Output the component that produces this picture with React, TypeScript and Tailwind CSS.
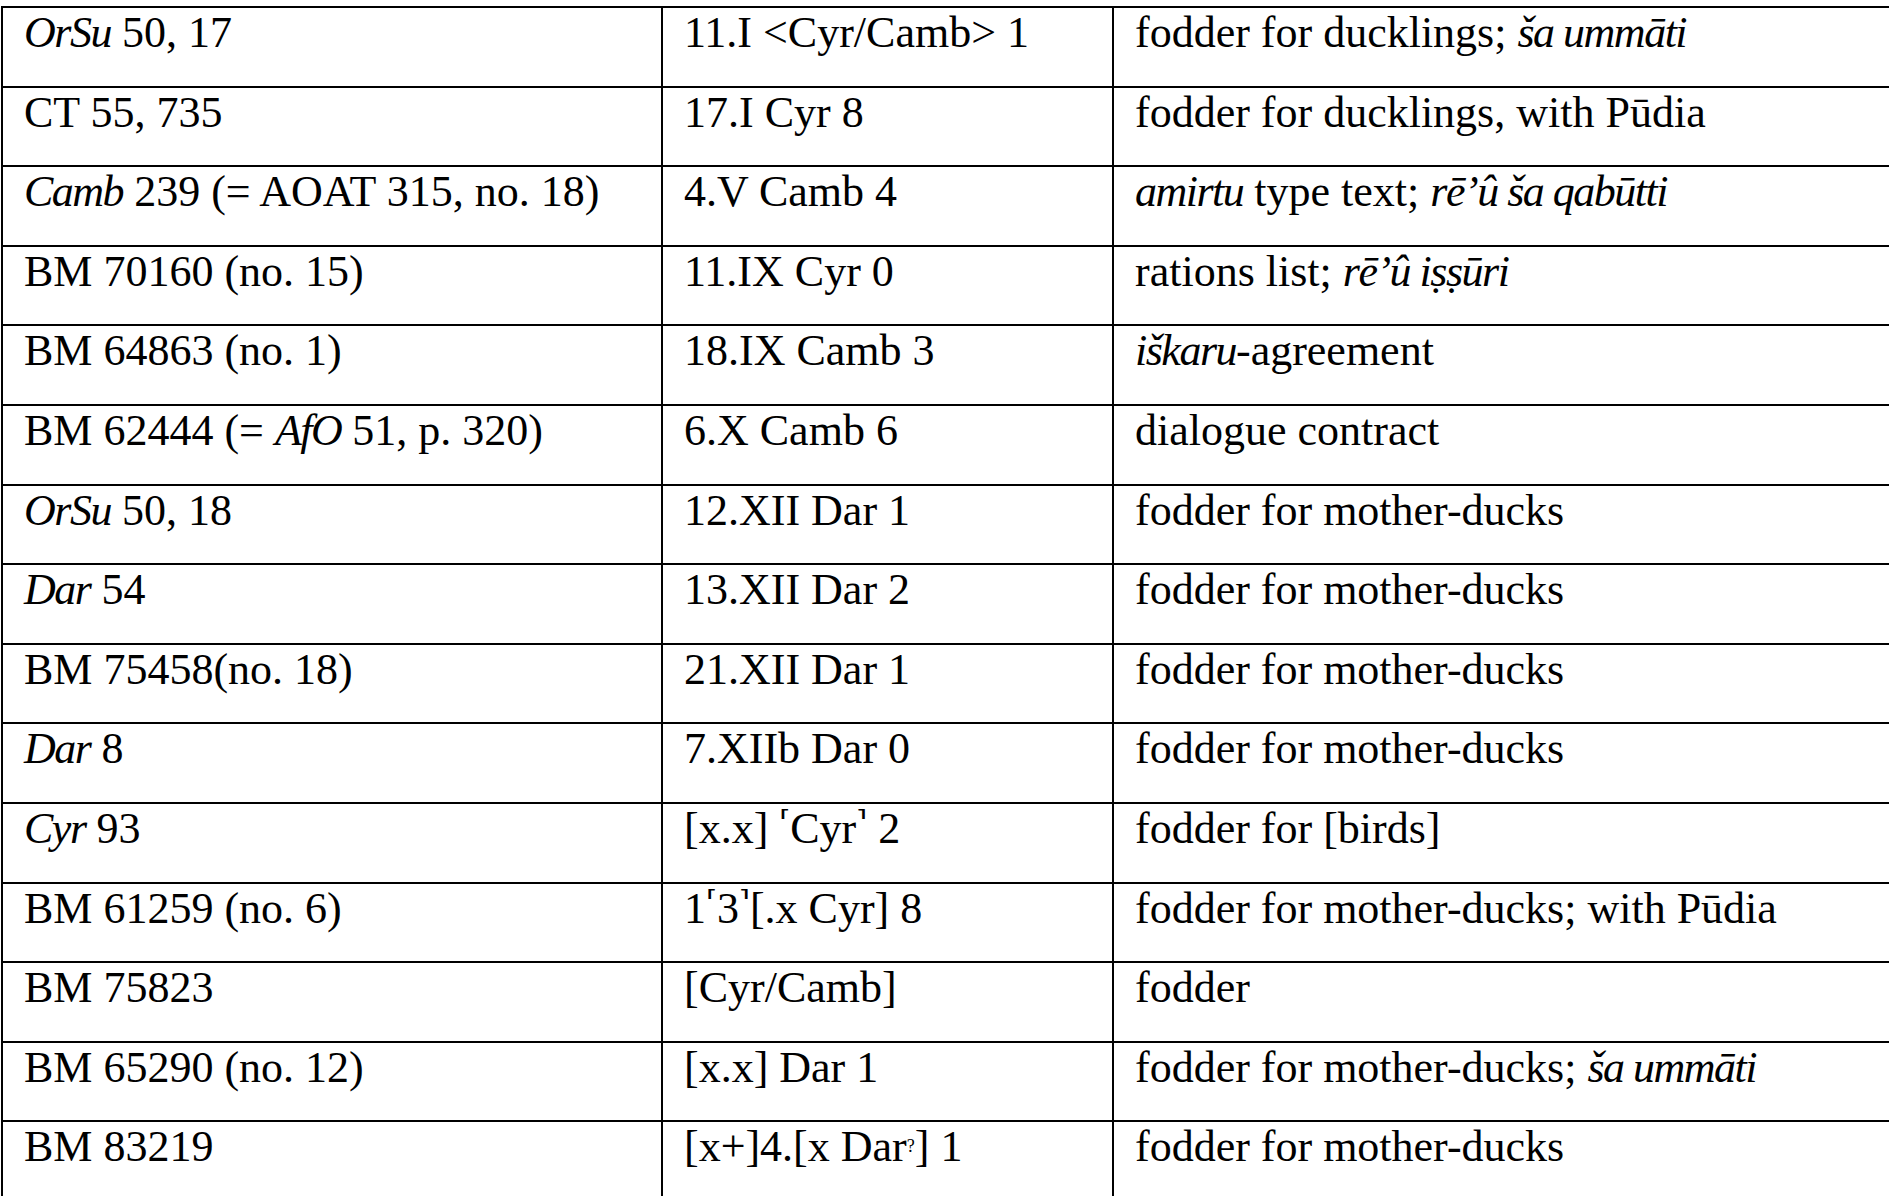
import type { ReactNode } from "react";

type Row = [ReactNode, ReactNode, ReactNode];

function I({ children }: { children: ReactNode }) {
  return <i className="tracking-[-1.5px]">{children}</i>;
}

function Half({ children }: { children: ReactNode }) {
  return (
    <>
      <span className="font-['DejaVu_Serif',serif] text-[28px] align-top">⸢</span>
      {children}
      <span className="font-['DejaVu_Serif',serif] text-[28px] align-top">⸣</span>
    </>
  );
}

const rows: Row[] = [
  [<><I>OrSu</I> 50, 17</>, "11.I <Cyr/Camb> 1", <>fodder for ducklings; <I>ša ummāti</I></>],
  ["CT 55, 735", "17.I Cyr 8", "fodder for ducklings, with Pūdia"],
  [
    <><I>Camb</I> 239 (= AOAT 315, no. 18)</>,
    "4.V Camb 4",
    <><I>amirtu</I> type text; <I>rē’û ša qabūtti</I></>,
  ],
  ["BM 70160 (no. 15)", "11.IX Cyr 0", <>rations list; <I>rē’û iṣṣūri</I></>],
  ["BM 64863 (no. 1)", "18.IX Camb 3", <><I>iškaru</I>-agreement</>],
  [<>BM 62444 (= <I>AfO</I> 51, p. 320)</>, "6.X Camb 6", "dialogue contract"],
  [<><I>OrSu</I> 50, 18</>, "12.XII Dar 1", "fodder for mother-ducks"],
  [<><I>Dar</I> 54</>, "13.XII Dar 2", "fodder for mother-ducks"],
  ["BM 75458(no. 18)", "21.XII Dar 1", "fodder for mother-ducks"],
  [<><I>Dar</I> 8</>, "7.XIIb Dar 0", "fodder for mother-ducks"],
  [<><I>Cyr</I> 93</>, <>[x.x] <Half>Cyr</Half> 2</>, "fodder for [birds]"],
  ["BM 61259 (no. 6)", <>1<Half>3</Half>[.x Cyr] 8</>, "fodder for mother-ducks; with Pūdia"],
  ["BM 75823", "[Cyr/Camb]", "fodder"],
  ["BM 65290 (no. 12)", "[x.x] Dar 1", <>fodder for mother-ducks; <I>ša ummāti</I></>],
  ["BM 83219", <>[x+]4.[x Dar<sup className="text-[18px]">?</sup>] 1</>, "fodder for mother-ducks"],
];

export default function App() {
  return (
    <div className="w-[1889px] h-[1196px] overflow-hidden bg-white pt-[6px] pl-[1px] text-black font-['Liberation_Serif',serif] text-[44px] leading-none">
      <table className="w-[1980px] table-fixed border-collapse">
        <colgroup>
          <col className="w-[660px]" />
          <col className="w-[451px]" />
          <col />
        </colgroup>
        <tbody>
          {rows.map((row, index) => (
            <tr key={index} className="h-[79.6px]">
              {row.map((cell, cellIndex) => (
                <td
                  key={cellIndex}
                  className="border-2 border-black align-top pl-[21px] pt-[3px] whitespace-nowrap overflow-hidden"
                >
                  {cell}
                </td>
              ))}
            </tr>
          ))}
        </tbody>
      </table>
    </div>
  );
}
